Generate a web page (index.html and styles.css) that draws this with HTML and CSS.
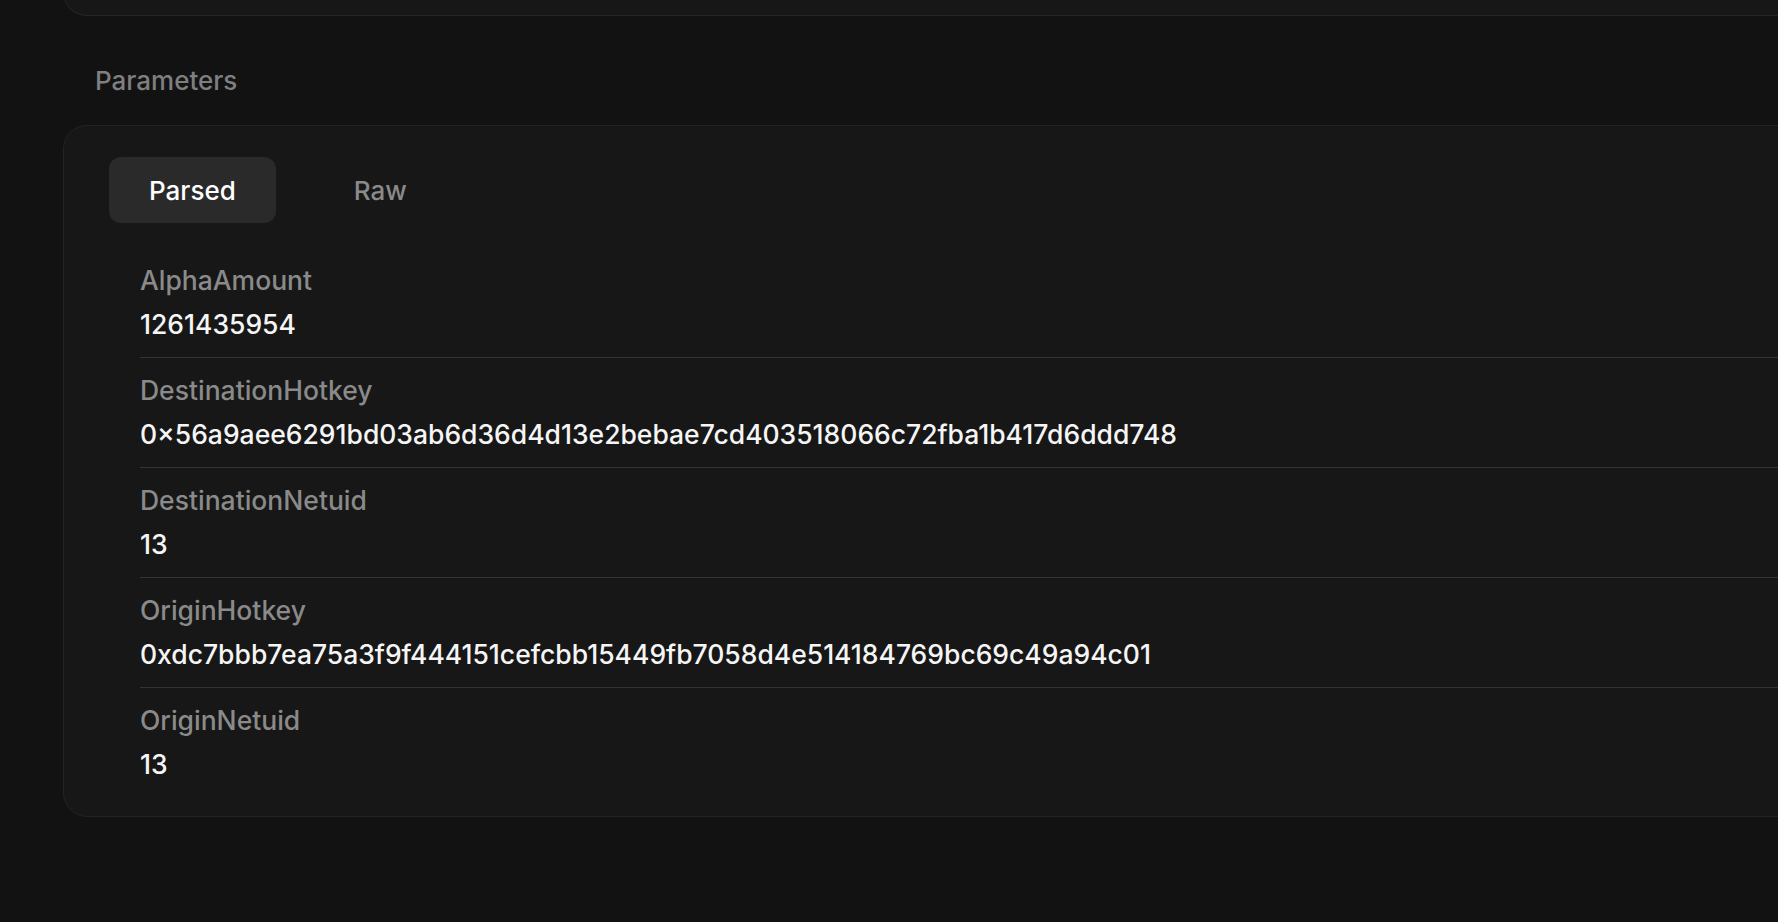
FILE: index.html
```html
<!DOCTYPE html>
<html lang="en">
<head>
<meta charset="utf-8">
<title>Parameters</title>
<link rel="stylesheet" href="styles.css">
</head>
<body>
<div class="page">
  <div class="prev-card"></div>
  <section class="params">
    <h2 class="params-title">Parameters</h2>
    <div class="card">
      <div class="tabs">
        <button class="tab tab-active">Parsed</button>
        <button class="tab">Raw</button>
      </div>
      <div class="rows">
        <div class="row">
          <div class="label">AlphaAmount</div>
          <div class="value">1261435954</div>
        </div>
        <div class="row">
          <div class="label">DestinationHotkey</div>
          <div class="value">0×56a9aee6291bd03ab6d36d4d13e2bebae7cd403518066c72fba1b417d6ddd748</div>
        </div>
        <div class="row">
          <div class="label">DestinationNetuid</div>
          <div class="value">13</div>
        </div>
        <div class="row">
          <div class="label">OriginHotkey</div>
          <div class="value">0xdc7bbb7ea75a3f9f444151cefcbb15449fb7058d4e514184769bc69c49a94c01</div>
        </div>
        <div class="row row-last">
          <div class="label">OriginNetuid</div>
          <div class="value">13</div>
        </div>
      </div>
    </div>
  </section>
</div>
</body>
</html>
```
FILE: styles.css
```css
html, body {
  margin: 0;
  padding: 0;
  background: #121212;
  overflow: hidden;
}
body {
  font-family: Inter, "Noto Sans", sans-serif;
  font-size: 26px;
  font-weight: 500;
  color: #f2f2f2;
  height: 922px;
}
.page {
  margin-left: 63px;
  width: 1800px;
}
.prev-card {
  height: 60px;
  margin-top: -45px;
  background: #171717;
  border: 1px solid #262626;
  border-top: none;
  border-radius: 0 0 24px 24px;
}
.params {
  display: flex;
  flex-direction: column;
}
.params-title {
  margin: 45px 0 24px 32px;
  font-size: 26px;
  font-weight: 500;
  line-height: 40px;
  color: #7f7f7f;
}
.card {
  background: #171717;
  border: 1px solid #232323;
  border-radius: 24px;
  padding: 31px 0 19px 45px;
}
.tabs {
  display: flex;
  gap: 38px;
  margin-bottom: 25px;
}
.tab {
  font-family: inherit;
  font-size: 26px;
  font-weight: 500;
  height: 66px;
  padding: 0 40px;
  border: none;
  border-radius: 12px;
  background: transparent;
  color: #8a8a8a;
}
.tab-active {
  background: #2a2a2a;
  color: #ffffff;
}
.rows {
  display: flex;
  flex-direction: column;
  margin-left: 31px;
  font-size: 26.5px;
}
.row {
  display: flex;
  flex-direction: column;
  gap: 4px;
  padding: 12px 0 13px;
  border-bottom: 1px solid #333333;
}
.row-last {
  border-bottom: none;
}
.label {
  line-height: 40px;
  color: #8a8a8a;
}
.value {
  line-height: 40px;
  color: #f5f5f5;
}
```
